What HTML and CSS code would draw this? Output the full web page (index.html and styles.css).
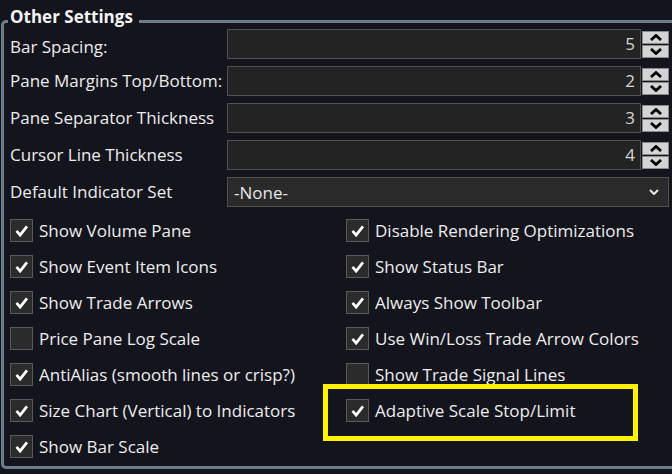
FILE: index.html
```html
<!DOCTYPE html>
<html lang="en">
<head>
<meta charset="utf-8">
<title>Other Settings</title>
<link rel="stylesheet" href="styles.css">
</head>
<body>
<section class="group">
  <h2 class="group-title">Other Settings</h2>
  <div class="fields">
    <label class="field-label field-label-low">Bar Spacing:</label>
    <div class="spin">
      <div class="spin-value">5</div>
      <div class="spin-buttons">
        <span class="spin-btn"><svg viewBox="0 0 12 7" class="chev"><polyline points="1,6 6,1.5 11,6"/></svg></span>
        <span class="spin-btn"><svg viewBox="0 0 12 7" class="chev"><polyline points="1,1 6,5.5 11,1"/></svg></span>
      </div>
    </div>

    <label class="field-label">Pane Margins Top/Bottom:</label>
    <div class="spin">
      <div class="spin-value">2</div>
      <div class="spin-buttons">
        <span class="spin-btn"><svg viewBox="0 0 12 7" class="chev"><polyline points="1,6 6,1.5 11,6"/></svg></span>
        <span class="spin-btn"><svg viewBox="0 0 12 7" class="chev"><polyline points="1,1 6,5.5 11,1"/></svg></span>
      </div>
    </div>

    <label class="field-label">Pane Separator Thickness</label>
    <div class="spin">
      <div class="spin-value">3</div>
      <div class="spin-buttons">
        <span class="spin-btn"><svg viewBox="0 0 12 7" class="chev"><polyline points="1,6 6,1.5 11,6"/></svg></span>
        <span class="spin-btn"><svg viewBox="0 0 12 7" class="chev"><polyline points="1,1 6,5.5 11,1"/></svg></span>
      </div>
    </div>

    <label class="field-label">Cursor Line Thickness</label>
    <div class="spin">
      <div class="spin-value">4</div>
      <div class="spin-buttons">
        <span class="spin-btn"><svg viewBox="0 0 12 7" class="chev"><polyline points="1,6 6,1.5 11,6"/></svg></span>
        <span class="spin-btn"><svg viewBox="0 0 12 7" class="chev"><polyline points="1,1 6,5.5 11,1"/></svg></span>
      </div>
    </div>

    <label class="field-label">Default Indicator Set</label>
    <div class="select">
      <span class="select-value">-None-</span>
      <svg viewBox="0 0 10 6" class="select-chev"><polyline points="1,1 5,5 9,1"/></svg>
    </div>
  </div>

  <div class="checks">
    <div class="check"><span class="box"><svg viewBox="0 0 23 23" class="tick"><polyline points="6,12 10,16.5 17.5,7"/></svg></span><span class="check-text">Show Volume Pane</span></div>
    <div class="check"><span class="box"><svg viewBox="0 0 23 23" class="tick"><polyline points="6,12 10,16.5 17.5,7"/></svg></span><span class="check-text">Show Event Item Icons</span></div>
    <div class="check"><span class="box"><svg viewBox="0 0 23 23" class="tick"><polyline points="6,12 10,16.5 17.5,7"/></svg></span><span class="check-text">Show Trade Arrows</span></div>
    <div class="check"><span class="box"></span><span class="check-text">Price Pane Log Scale</span></div>
    <div class="check"><span class="box"><svg viewBox="0 0 23 23" class="tick"><polyline points="6,12 10,16.5 17.5,7"/></svg></span><span class="check-text">AntiAlias (smooth lines or crisp?)</span></div>
    <div class="check"><span class="box"><svg viewBox="0 0 23 23" class="tick"><polyline points="6,12 10,16.5 17.5,7"/></svg></span><span class="check-text">Size Chart (Vertical) to Indicators</span></div>
    <div class="check"><span class="box"><svg viewBox="0 0 23 23" class="tick"><polyline points="6,12 10,16.5 17.5,7"/></svg></span><span class="check-text">Show Bar Scale</span></div>

    <div class="check"><span class="box"><svg viewBox="0 0 23 23" class="tick"><polyline points="6,12 10,16.5 17.5,7"/></svg></span><span class="check-text">Disable Rendering Optimizations</span></div>
    <div class="check"><span class="box"><svg viewBox="0 0 23 23" class="tick"><polyline points="6,12 10,16.5 17.5,7"/></svg></span><span class="check-text">Show Status Bar</span></div>
    <div class="check"><span class="box"><svg viewBox="0 0 23 23" class="tick"><polyline points="6,12 10,16.5 17.5,7"/></svg></span><span class="check-text">Always Show Toolbar</span></div>
    <div class="check"><span class="box"><svg viewBox="0 0 23 23" class="tick"><polyline points="6,12 10,16.5 17.5,7"/></svg></span><span class="check-text">Use Win/Loss Trade Arrow Colors</span></div>
    <div class="check"><span class="box"></span><span class="check-text">Show Trade Signal Lines</span></div>
    <div class="check"><span class="box"><svg viewBox="0 0 23 23" class="tick"><polyline points="6,12 10,16.5 17.5,7"/></svg></span><span class="check-text">Adaptive Scale Stop/Limit</span></div>
  </div>
</section>
<div class="highlight"></div>
</body>
</html>
```

FILE: styles.css
```css
html, body {
  margin: 0;
  padding: 0;
}

body {
  background: #14141d;
  color: #ededed;
  font-family: "Open Sans", "Noto Sans", "DejaVu Sans", sans-serif;
  font-size: 17px;
  width: 672px;
  height: 474px;
  overflow: hidden;
  position: relative;
}

.group {
  position: relative;
  box-sizing: border-box;
  margin: 20px 0 0 1px;
  width: 720px;
  height: 449px;
  border: 3px solid #6d7d8e;
  border-radius: 5px;
  padding: 6px 0 0 6px;
}

.group-title {
  position: absolute;
  top: -16px;
  left: 4px;
  margin: 0;
  padding: 0 6px 0 2px;
  background: #14141d;
  font-size: 17px;
  font-weight: 700;
  line-height: 20px;
  color: #f4f4f4;
}

.fields {
  display: grid;
  grid-template-columns: 217px 442px;
  grid-auto-rows: 30px;
  row-gap: 7px;
}

.field-label {
  display: flex;
  align-items: center;
  white-space: nowrap;
  line-height: 20px;
}

.field-label-low {
  padding-top: 6px;
}

.spin {
  display: flex;
}

.spin-value {
  flex: 1;
  box-sizing: border-box;
  border: 1px solid #505050;
  background: #232323;
  color: #d6d6d6;
  text-align: right;
  padding-right: 5px;
  line-height: 28px;
}

.spin-buttons {
  width: 27px;
  margin-left: 1px;
  display: flex;
  flex-direction: column;
  padding: 2px 0 1px;
  gap: 1px;
}

.spin-btn {
  flex: 1;
  box-sizing: border-box;
  background: #d4d4d4;
  border: 1px solid #8a8a8a;
  display: flex;
  align-items: center;
  justify-content: center;
}

.chev {
  width: 12px;
  height: 7px;
  fill: none;
  stroke: #000;
  stroke-width: 2.8;
}

.select {
  box-sizing: border-box;
  border: 1px solid #505050;
  background: #2a2a2a;
  display: flex;
  align-items: center;
  justify-content: space-between;
  padding: 0 9px 0 6px;
}

.select-value {
  color: #e6e6e6;
}

.select-chev {
  width: 10px;
  height: 6px;
  fill: none;
  stroke: #e8e8e8;
  stroke-width: 2;
}

.checks {
  margin-top: 5px;
  display: grid;
  grid-template-columns: 336px 336px;
  grid-template-rows: repeat(7, 36px);
  grid-auto-flow: column;
}

.check {
  display: flex;
  align-items: center;
  gap: 6px;
  white-space: nowrap;
}

.box {
  box-sizing: border-box;
  width: 23px;
  height: 23px;
  flex: none;
  border: 1px solid #5a5a5a;
  background: #2b2b2b;
  display: flex;
}

.tick {
  width: 21px;
  height: 21px;
  fill: none;
  stroke: #ffffff;
  stroke-width: 3;
}

.highlight {
  position: absolute;
  left: 323px;
  top: 384px;
  width: 315px;
  height: 57px;
  box-sizing: border-box;
  border: 5px solid #fff200;
}
```
